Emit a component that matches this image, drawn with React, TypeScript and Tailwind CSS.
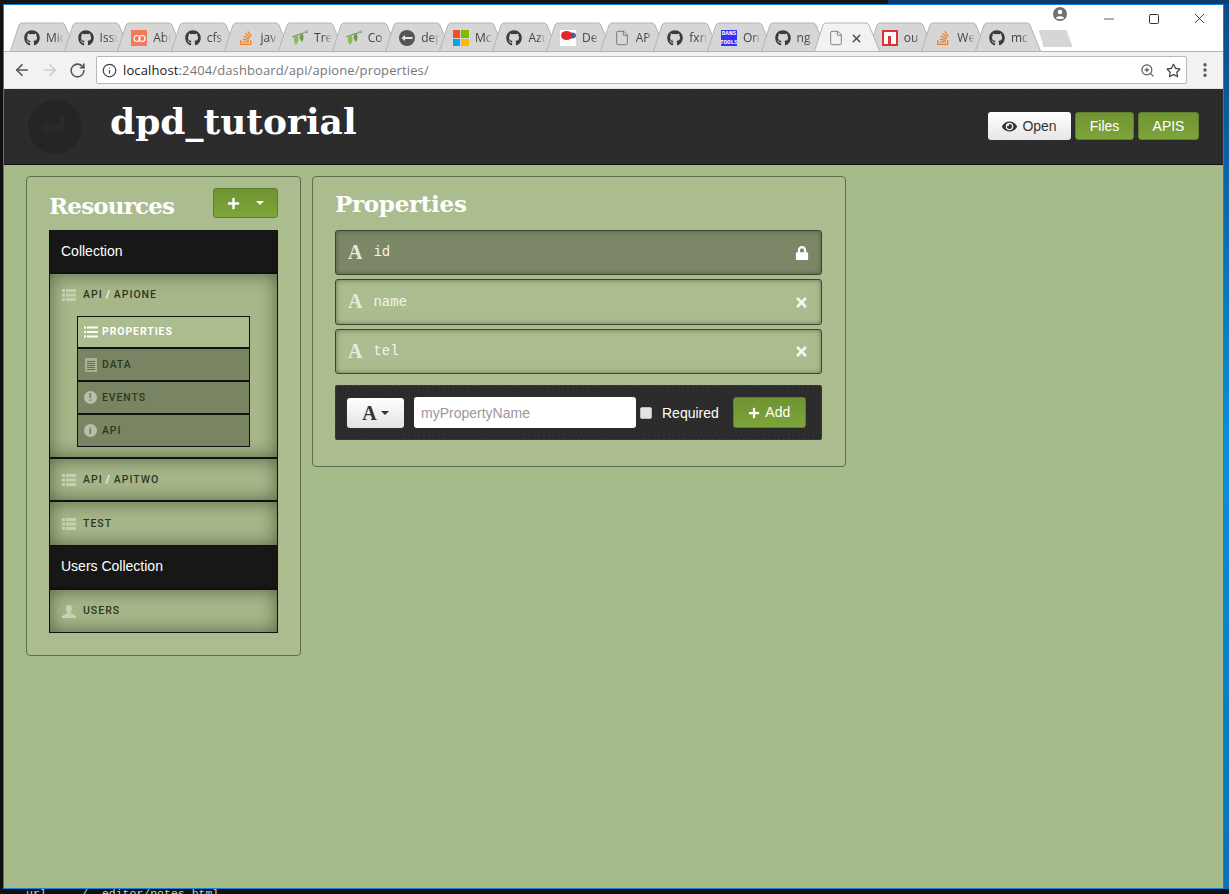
import { FaGithub, FaStackOverflow, FaEye, FaLock, FaTimes, FaPlus, FaRegStar } from 'react-icons/fa'
import { ArrowLeft, ArrowRight, RotateCw, Info, File, X, ZoomIn, Minus, Square, EllipsisVertical } from 'lucide-react'

const SLAB = 'font-["DejaVu_Serif",serif]'
const TEXTURE = 'bg-[repeating-linear-gradient(90deg,#2d2d2d_0,#2d2d2d_2px,#292929_2px,#292929_3px)]'

function LeafIcon() {
  return (
    <svg width="16" height="16" viewBox="0 0 16 16">
      <path d="M0 7 C5 5 10 3 16 2" stroke="#77806a" strokeWidth="1" fill="none" />
      <path d="M3 6 C1 9 2 13 4 15 C7 12 7 8 5.5 5 Z" fill="#8db857" />
      <path d="M8 4.5 C7 7 8 10 10 12 C12 9 12 6 10.5 4 Z" fill="#6d9c3f" />
      <path d="M11 3 C12 1 14 0 16 0 C15.5 2 13.5 3.5 11 3 Z" fill="#a3bd80" />
    </svg>
  )
}

function AbstractIcon() {
  return (
    <div className="w-4 h-4 bg-[#f4795b] flex items-center justify-center">
      <svg width="13" height="9" viewBox="0 0 13 9" fill="none" stroke="#fff" strokeWidth="1.2">
        <circle cx="4" cy="4.5" r="3" />
        <circle cx="9" cy="4.5" r="3" />
      </svg>
    </div>
  )
}

function DpdIcon() {
  return (
    <svg width="16" height="16" viewBox="0 0 16 16">
      <circle cx="8" cy="8" r="8" fill="#555" />
      <path d="M2.5 8 L6 5 V7 H13.5 V9 H6 V11 Z" fill="#e5e5e5" />
    </svg>
  )
}

function MsIcon() {
  return (
    <div className="w-4 h-4 grid grid-cols-2 gap-px">
      <div className="bg-[#f25022]" />
      <div className="bg-[#7fba00]" />
      <div className="bg-[#00a4ef]" />
      <div className="bg-[#ffb900]" />
    </div>
  )
}

function BallIcon() {
  return (
    <svg width="16" height="16" viewBox="0 0 16 16">
      <rect width="16" height="16" fill="#fff" />
      <ellipse cx="12" cy="5.5" rx="4" ry="3" fill="#4a5c9a" />
      <ellipse cx="6.5" cy="5.5" rx="5.5" ry="4.5" fill="#e8232a" />
    </svg>
  )
}

function DansIcon() {
  return (
    <div className='w-4 h-4 bg-[#3434f4] flex flex-col items-center justify-between overflow-hidden text-white font-bold leading-[7px] text-[6px] font-["Liberation_Mono",monospace]'>
      <span>DANS</span>
      <span>TOOLS</span>
    </div>
  )
}

function NpmIcon() {
  return (
    <div className="w-4 h-4 bg-[#d9333a] flex items-end justify-center p-[2px]">
      <div className="w-full h-full bg-white flex justify-center items-end">
        <div className="w-[3px] h-[8px] bg-[#d9333a]" />
      </div>
    </div>
  )
}

const TABS = [
  { icon: 'gh', text: 'Mic' },
  { icon: 'gh', text: 'Issu' },
  { icon: 'abstract', text: 'Abc' },
  { icon: 'gh', text: 'cfs' },
  { icon: 'so', text: 'java' },
  { icon: 'leaf', text: 'Tre' },
  { icon: 'leaf', text: 'Co' },
  { icon: 'dpd', text: 'dep' },
  { icon: 'ms', text: 'Mc' },
  { icon: 'gh', text: 'Azu' },
  { icon: 'ball', text: 'De' },
  { icon: 'file', text: 'AP' },
  { icon: 'gh', text: 'fxn' },
  { icon: 'dans', text: 'On' },
  { icon: 'gh', text: 'ng' },
  { icon: 'file', text: '', active: true },
  { icon: 'npm', text: 'ou' },
  { icon: 'so', text: 'We' },
  { icon: 'gh', text: 'mc' },
]

function TabIcon({ name }: { name: string }) {
  if (name === 'gh') return <FaGithub size={16} color="#3b3b3b" />
  if (name === 'so') return <FaStackOverflow size={16} color="#f48024" />
  if (name === 'leaf') return <LeafIcon />
  if (name === 'abstract') return <AbstractIcon />
  if (name === 'dpd') return <DpdIcon />
  if (name === 'ms') return <MsIcon />
  if (name === 'ball') return <BallIcon />
  if (name === 'dans') return <DansIcon />
  if (name === 'npm') return <NpmIcon />
  return <File size={16} color="#666" strokeWidth={1.2} />
}

function Tab({ icon, text, active }: { icon: string; text: string; active?: boolean }) {
  return (
    <div className={`relative w-[66px] h-[29px] -mr-[12.4px] shrink-0 ${active ? 'z-10' : ''}`}>
      <svg className="absolute inset-0" width="66" height="29" viewBox="0 0 66 29">
        <path
          d="M0.5 29 L9 3 Q10 1 12 1 L52 1 Q54 1 55 3 L65.5 29"
          fill={active ? '#f2f2f2' : '#d6d6d6'}
          stroke="#b4b4b4"
          strokeWidth="1"
        />
      </svg>
      <div className="relative h-full flex items-center pl-[14px] pt-[3px]">
        <div className="w-4 h-4 shrink-0">
          <TabIcon name={icon} />
        </div>
        {active ? (
          <X size={13} color="#444" strokeWidth={2.5} className="ml-[6px]" />
        ) : (
          <span className='ml-[6px] w-[18px] overflow-hidden whitespace-nowrap text-[12px] text-[#444] font-["Open_Sans",sans-serif] [mask-image:linear-gradient(to_right,black_55%,transparent)]'>
            {text}
          </span>
        )}
      </div>
    </div>
  )
}

function ChromeBar() {
  return (
    <>
      <div className="relative h-[47px] bg-white flex items-end pl-[6px] border-b border-[#b4b4b4] shrink-0">
        {TABS.map((t, i) => (
          <Tab key={i} icon={t.icon} text={t.text} active={t.active} />
        ))}
        <div className="ml-[10px] mb-[4px] w-[34px] h-[17px] bg-[#d6d6d6] [clip-path:polygon(0_0,82%_0,100%_100%,15%_100%)]" />
        {/* profile and window buttons */}
        <svg className="absolute left-[1049px] top-[2px]" width="14" height="14" viewBox="0 0 14 14">
          <circle cx="7" cy="7" r="7" fill="#6f6f6f" />
          <circle cx="7" cy="5" r="2.3" fill="#fff" />
          <path d="M2.8 11 C4 8.5 10 8.5 11.2 11 C10 12.5 4 12.5 2.8 11 Z" fill="#fff" />
        </svg>
        <Minus className="absolute left-[1097px] top-[6px]" size={16} color="#111" strokeWidth={1} />
        <Square className="absolute left-[1144px] top-[8px]" size={12} color="#111" strokeWidth={1.7} />
        <X className="absolute left-[1187px] top-[5px]" size={17} color="#111" strokeWidth={1.1} />
      </div>
      <div className="h-[37px] bg-[#f2f2f2] flex items-center shrink-0 border-b border-[#e0e0e0]">
        <ArrowLeft className="ml-[9px]" size={18} color="#555" strokeWidth={2.2} />
        <ArrowRight className="ml-[10px]" size={18} color="#ccc" strokeWidth={2.2} />
        <RotateCw className="ml-[10px]" size={17} color="#555" strokeWidth={2.2} />
        <div className="ml-[10px] w-[1091px] h-[28px] bg-white border border-[#b9b9b9] rounded-[2px] flex items-center pl-[5px]">
          <Info size={15} color="#444" strokeWidth={2} />
          <span className='ml-[6px] mt-[1px] text-[13px] font-["Open_Sans",sans-serif] tracking-[0.12px] text-[#222]'>
            localhost<span className="text-[#777]">:2404/dashboard/api/apione/properties/</span>
          </span>
          <ZoomIn className="ml-auto" size={15} color="#555" strokeWidth={1.8} />
          <FaRegStar className="ml-[11px] mr-[5px]" size={15} color="#444" />
        </div>
        <EllipsisVertical className="ml-[9px]" size={18} color="#555" strokeWidth={2.5} />
      </div>
    </>
  )
}

function Header() {
  return (
    <div className={`h-[76px] shrink-0 flex items-center border-b border-[#111] ${TEXTURE}`}>
      <div className="ml-[24px] w-[54px] h-[54px] rounded-full bg-[#252525] flex items-center justify-center">
        <svg width="34" height="26" viewBox="0 0 34 26">
          <path d="M2 13 L11 6 V10 H22 V2 H27 V18 H11 V22 Z" fill="#292929" />
        </svg>
      </div>
      <div className={`ml-[28px] -mt-[11px] text-[36px] font-bold text-white leading-none ${SLAB}`}>dpd_tutorial</div>
      <div className='ml-auto mr-[24px] -mt-[1px] flex gap-[4px] text-[14px] font-["Liberation_Sans",sans-serif]'>
        <div className="w-[83px] h-[28px] rounded-[3px] bg-linear-to-b from-white to-[#e6e6e6] text-[#333] flex items-center justify-center gap-[5px]">
          <FaEye size={15} color="#333" />
          Open
        </div>
        <GreenButton className="w-[59px]">Files</GreenButton>
        <GreenButton className="w-[61px]">APIS</GreenButton>
      </div>
    </div>
  )
}

function GreenButton({ className, children }: { className: string; children: React.ReactNode }) {
  return (
    <div className={`h-[28px] rounded-[3px] bg-linear-to-b from-[#6f9332] to-[#7ea53a] border border-[#5f7f2c] text-white flex items-center justify-center ${className}`}>
      {children}
    </div>
  )
}

function ThList({ color = '#c5d0b2' }: { color?: string }) {
  return (
    <svg width="14" height="12" viewBox="0 0 14 12" fill={color}>
      <rect x="0" y="0" width="3" height="3" />
      <rect x="4" y="0" width="10" height="3" />
      <rect x="0" y="4.5" width="3" height="3" />
      <rect x="4" y="4.5" width="10" height="3" />
      <rect x="0" y="9" width="3" height="3" />
      <rect x="4" y="9" width="10" height="3" />
    </svg>
  )
}

function ListLines() {
  return (
    <svg width="14" height="12" viewBox="0 0 14 12" fill="#fff">
      <rect x="0" y="0.5" width="2" height="2" />
      <rect x="3" y="0.5" width="11" height="2" />
      <rect x="0" y="5" width="2" height="2" />
      <rect x="3" y="5" width="11" height="2" />
      <rect x="0" y="9.5" width="2" height="2" />
      <rect x="3" y="9.5" width="11" height="2" />
    </svg>
  )
}

function DataIcon() {
  return (
    <svg width="12" height="14" viewBox="0 0 12 14">
      <rect width="12" height="14" fill="#a8b096" />
      <path d="M2 3.5 H10 M2 5.5 H10 M2 7.5 H10 M2 9.5 H10 M2 11.5 H10" stroke="#626c50" strokeWidth="1" />
    </svg>
  )
}

function RoundIcon({ ch, font }: { ch: string; font: string }) {
  return (
    <div className={`w-[13px] h-[13px] rounded-full bg-[#b9bfa9] text-[#6f7a5d] text-[10px] font-bold leading-none flex items-center justify-center ${font}`}>
      {ch}
    </div>
  )
}

function UserIcon() {
  return (
    <svg width="14" height="13" viewBox="0 0 14 13" fill="#c9d2b9">
      <ellipse cx="7" cy="3.6" rx="3" ry="3.6" />
      <path d="M5.5 7 H8.5 L9 8.5 L14 11 V13 H0 V11 L5 8.5 Z" />
    </svg>
  )
}

function ResourceRow({ icon, height, children }: { icon: React.ReactNode; height: string; children?: React.ReactNode }) {
  return (
    <div className={`${height} flex items-center pl-[12px] gap-[7px] text-[#2a3a22] tracking-[1px] text-[10.5px] font-medium font-["Roboto",sans-serif]`}>
      <div className="w-[14px] flex justify-center">{icon}</div>
      {children}
    </div>
  )
}

function SubItem({ icon, label, active, height }: { icon: React.ReactNode; label: string; active?: boolean; height: string }) {
  return (
    <div
      className={`${height} flex items-center pl-[5px] gap-[4px] border-b-2 border-[#111] last:border-b-0 text-[10.5px] tracking-[0.9px] font-["Roboto",sans-serif] ${
        active ? 'bg-[#abbc8f] text-white font-bold' : 'bg-[#798463] text-[#2a3a22] font-medium'
      }`}
    >
      <div className="w-[15px] flex justify-center">{icon}</div>
      {label}
    </div>
  )
}

function Slash() {
  return <span className="text-white mx-[3px]">/</span>
}

const ROW_SHADOW = 'bg-[#a7b78a] shadow-[inset_0_0_18px_rgba(62,72,42,0.75)] border-b-2 border-[#111]'

function ResourcesPanel() {
  return (
    <div className='w-[275px] h-[480px] shrink-0 border border-[#5e6e4e] rounded-[4px] bg-[#abbc8f] pl-[22px] pr-[22px] pt-[11px] font-["Liberation_Sans",sans-serif]'>
      <div className="h-[42px] flex justify-between items-start">
        <div className={`mt-[3px] text-[23px] tracking-[-0.8px] font-bold text-white leading-[30px] ${SLAB}`}>Resources</div>
        <div className="w-[65px] h-[30px] rounded-[3px] bg-linear-to-b from-[#6f9332] to-[#7ea53a] border border-[#5f7f2c] flex items-center justify-center gap-[16px]">
          <FaPlus size={13} color="#fff" />
          <div className="w-0 h-0 border-x-[4px] border-x-transparent border-t-[4px] border-t-white" />
        </div>
      </div>
      <div className="border-x border-b border-[#111]">
        <div className="h-[42px] bg-[#171717] text-white text-[14px] flex items-center pl-[11px]">Collection</div>
        <div className={`h-[187px] border-t-2 border-t-[#111] ${ROW_SHADOW}`}>
          <ResourceRow icon={<ThList />} height="h-[42px]">
            <span>
              API<Slash />APIONE
            </span>
          </ResourceRow>
          <div className="ml-[27px] w-[173px] border border-[#111]">
            <SubItem icon={<ListLines />} label="PROPERTIES" active height="h-[32px]" />
            <SubItem icon={<DataIcon />} label="DATA" height="h-[33px]" />
            <SubItem icon={<RoundIcon ch="!" font='font-["Liberation_Sans",sans-serif]' />} label="EVENTS" height="h-[33px]" />
            <SubItem icon={<RoundIcon ch="i" font='font-["Liberation_Serif",serif]' />} label="API" height="h-[31px]" />
          </div>
        </div>
        <div className={`h-[43px] ${ROW_SHADOW}`}>
          <ResourceRow icon={<ThList />} height="h-full">
            <span>
              API<Slash />APITWO
            </span>
          </ResourceRow>
        </div>
        <div className="h-[43px] bg-[#a7b78a] shadow-[inset_0_0_18px_rgba(62,72,42,0.75)]">
          <ResourceRow icon={<ThList />} height="h-full">
            TEST
          </ResourceRow>
        </div>
        <div className="h-[43px] bg-[#171717] text-white text-[14px] flex items-center pl-[11px] border-y border-[#111]">
          Users Collection
        </div>
        <div className="h-[44px] border-t-2 border-[#111] bg-[#a7b78a] shadow-[inset_0_0_18px_rgba(62,72,42,0.75)]">
          <ResourceRow icon={<UserIcon />} height="h-full">
            USERS
          </ResourceRow>
        </div>
      </div>
    </div>
  )
}

function PropertyRow({ name, dark, height, locked }: { name: string; dark?: boolean; height: string; locked?: boolean }) {
  return (
    <div
      className={`${height} flex items-center rounded-[3px] border border-[#3b4630] pl-[12px] pr-[12px] shadow-[inset_0_0_5px_rgba(50,60,35,0.55)] ${
        dark ? 'bg-[#7c8768]' : 'bg-[#abbc8f]'
      }`}
    >
      <span className='-mt-[2px] text-[20px] font-bold text-[#e6eadc] leading-none font-["Liberation_Serif",serif]'>A</span>
      <span className='ml-[11px] text-[14px] text-[#f2f4ec] font-["Liberation_Mono",monospace]'>{name}</span>
      <div className="ml-auto">
        {locked ? <FaLock size={14} color="#fff" /> : <FaTimes size={15} color="#f4f4f0" />}
      </div>
    </div>
  )
}

function PropertiesPanel() {
  return (
    <div className='w-[534px] h-[291px] shrink-0 border border-[#5e6e4e] rounded-[4px] bg-[#abbc8f] pl-[22px] pr-[23px] pt-[11px] font-["Liberation_Sans",sans-serif]'>
      <div className={`h-[42px] pt-[1px] text-[23px] tracking-[-0.3px] font-bold text-white leading-[30px] ${SLAB}`}>Properties</div>
      <div className="flex flex-col gap-[4px]">
        <PropertyRow name="id" dark locked height="h-[45px]" />
        <PropertyRow name="name" height="h-[46px]" />
        <PropertyRow name="tel" height="h-[45px]" />
      </div>
      <div className={`mt-[11px] h-[55px] rounded-[2px] flex items-center pl-[11px] border border-dashed border-[#3e3e3e] ${TEXTURE}`}>
        <div className="w-[57px] h-[30px] rounded-[3px] bg-linear-to-b from-white to-[#e3e3e3] flex items-center justify-center gap-[4px]">
          <span className='text-[20px] font-bold text-[#333] leading-none font-["Liberation_Serif",serif]'>A</span>
          <div className="w-0 h-0 border-x-[4px] border-x-transparent border-t-[4px] border-t-[#333]" />
        </div>
        <input
          readOnly
          placeholder="myPropertyName"
          className="ml-[10px] w-[222px] h-[31px] rounded-[3px] bg-white px-[7px] text-[14px] placeholder:text-[#999] outline-none"
        />
        <div className="ml-[4px] w-[12px] h-[12px] rounded-[2px] bg-[#e2e2e2] border border-[#bbb] mt-[1px]" />
        <span className="ml-[10px] text-[14px] text-white mt-[1px]">Required</span>
        <div className="ml-[14px] w-[73px] h-[31px] rounded-[3px] bg-linear-to-b from-[#6f9332] to-[#7ea53a] border border-[#5f7f2c] text-white text-[14px] flex items-center justify-center gap-[5px]">
          <FaPlus size={12} color="#fff" />
          Add
        </div>
      </div>
    </div>
  )
}

export default function App() {
  return (
    <div className="w-[1229px] h-[894px] overflow-hidden bg-[#111] flex flex-col">
      <div className="h-[4px] shrink-0 flex">
        <div className="w-[888px] bg-[#151515]" />
        <div className="flex-1 bg-[#0c3a6a]" />
      </div>
      <div className="h-[885px] shrink-0 flex">
        <div className="w-[3px] shrink-0 bg-[#111]" />
        <div className="w-[1221px] shrink-0 flex flex-col border-x border-y border-[#1583d7]">
          <ChromeBar />
          <Header />
          <div className="flex-1 bg-[#a7ba8a] flex items-start gap-[11px] pl-[22px] pt-[11px]">
            <ResourcesPanel />
            <PropertiesPanel />
          </div>
        </div>
        <div className="flex-1 bg-linear-to-b from-[#0c4a86] via-[#0a90dc] to-[#0a70b8]" />
      </div>
      <div className='pl-[26px] -mt-[2px] text-[11.5px] leading-[14px] whitespace-pre text-[#ccc] font-["Liberation_Mono",monospace]'>
        url     /  editor/notes.html
      </div>
    </div>
  )
}
